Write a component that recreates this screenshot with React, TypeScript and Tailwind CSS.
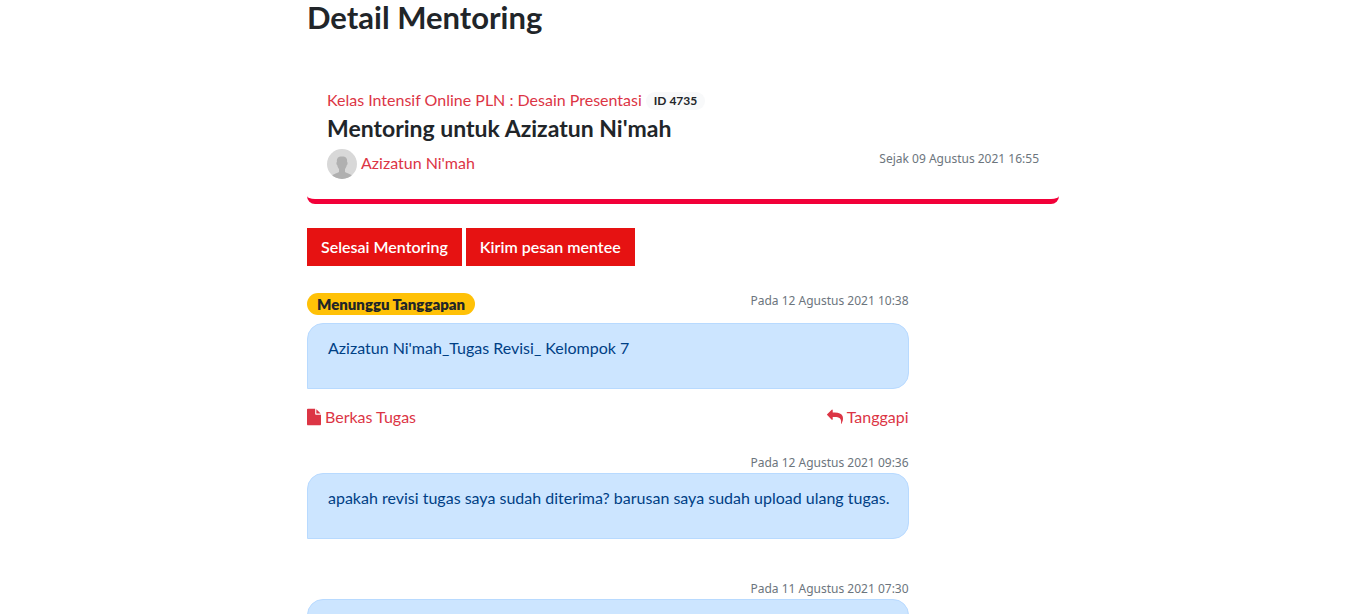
import type { ReactNode } from 'react';

type Message = {
  date: string;
  text?: string;
  status?: string;
  actions?: boolean;
};

const messages: Message[] = [
  {
    date: 'Pada 12 Agustus 2021 10:38',
    text: "Azizatun Ni'mah_Tugas Revisi_ Kelompok 7",
    status: 'Menunggu Tanggapan',
    actions: true,
  },
  {
    date: 'Pada 12 Agustus 2021 09:36',
    text: 'apakah revisi tugas saya sudah diterima? barusan saya sudah upload ulang tugas.',
  },
  { date: 'Pada 11 Agustus 2021 07:30' },
];

function Avatar() {
  return (
    <svg viewBox="0 0 30 30" className="size-[30px] shrink-0 rounded-full" aria-hidden="true">
      <rect width="30" height="30" fill="#d8d8d8" />
      <path
        d="M15 7.500c-4 0-5.400 1.800-5.100 5.500-.9.200-.5 2.900.4 3.300.3 1.600.8 2.800 1.700 3.700v3c-1.300 1.300-5 1.800-7.500 3.500V30h21v-3.500c-2.500-1.700-6.200-2.200-7.500-3.500v-3c.9-.9 1.400-2.100 1.700-3.700.9-.4 1.300-3.100.4-3.300.3-3.700-1.100-5.500-5.100-5.500z"
        fill="#b0b0b0"
      />
    </svg>
  );
}

function FileIcon() {
  return (
    <svg viewBox="0 0 1536 1792" className="h-[18px] w-3.5" fill="currentColor" aria-hidden="true">
      <path d="M1024 512V40q22 14 36 28l408 408q14 14 28 36h-472zm-128 32q0 40 28 68t68 28h544v1056q0 40-28 68t-68 28H96q-40 0-68-28t-28-68V96Q0 56 28 28T96 0h800v544z" />
    </svg>
  );
}

function ReplyIcon() {
  return (
    <svg viewBox="0 0 1792 1792" className="size-4" fill="currentColor" aria-hidden="true">
      <path
        transform="translate(1792 0) scale(-1 1)"
        d="M1792 640q0 26-19 45l-512 512q-19 19-45 19t-45-19-19-45V896H928q-98 0-175.500 6t-154 21.500-133 42.500-105.500 69.500-80 101T231.500 1274t-17.500 181q0 55 5 123 0 6 2.500 23.500t2.500 26.500q0 15-8.500 25t-23.500 10q-16 0-28-17-7-9-13-22t-13.500-30-10.500-24Q0 1286 0 1120q0-199 53-333 162-403 875-403h224V128q0-26 19-45t45-19 45 19l512 512q19 19 19 45z"
      />
    </svg>
  );
}

function Timestamp({ children }: { children: ReactNode }) {
  return (
    <time className="font-['Noto_Sans',sans-serif] text-[12px] leading-5 text-[#6c757d]">{children}</time>
  );
}

function ActionButton({ children }: { children: ReactNode }) {
  return (
    <button type="button" className="h-[38px] bg-[#e61212] px-3.5 font-semibold text-white">
      {children}
    </button>
  );
}

function MessageItem({ date, text, status, actions }: Message) {
  return (
    <li>
      <div className={status ? 'flex h-8 items-start justify-between' : 'flex h-5 items-start justify-end'}>
        {status && (
          <span className="mt-0.5 flex h-[22px] items-center rounded-full bg-[#ffc107] px-2.5 text-[15px] font-extrabold">
            {status}
          </span>
        )}
        <Timestamp>{date}</Timestamp>
      </div>
      <div className="mb-4 min-h-[66px] rounded-2xl rounded-bl-none border border-[#b8daff] bg-[#cce5ff] py-3 pr-2 pl-5 leading-6 text-[#004085]">
        {text}
      </div>
      {actions && (
        <div className="flex justify-between leading-6 text-[#dc3545]">
          <a href="#berkas" className="flex items-center gap-1">
            <FileIcon />
            Berkas Tugas
          </a>
          <a href="#tanggapi" className="flex items-center gap-1">
            <ReplyIcon />
            Tanggapi
          </a>
        </div>
      )}
    </li>
  );
}

export default function App() {
  return (
    <main className="mx-auto max-w-[752px] bg-white font-['Lato',sans-serif] text-[16px] text-[#212529]">
      <h1 className="text-[31px] leading-[34px] font-bold">Detail Mentoring</h1>

      <section className="mt-[34px] rounded-lg border-b-[5px] border-[#f20039] p-5">
        <div className="flex items-center gap-1 leading-6">
          <a href="#kelas" className="text-[#dc3545]">
            Kelas Intensif Online PLN : Desain Presentasi
          </a>
          <span className="mt-0.5 flex h-[18px] items-center rounded-full bg-[#f8f9fa] px-2 text-[12px] font-bold">
            ID 4735
          </span>
        </div>
        <h2 className="text-[23px] leading-8 font-bold">Mentoring untuk Azizatun Ni'mah</h2>
        <div className="mt-[5px] flex items-start justify-between">
          <a href="#mentee" className="flex items-start gap-1 leading-7 text-[#dc3545]">
            <Avatar />
            Azizatun Ni'mah
          </a>
          <Timestamp>Sejak 09 Agustus 2021 16:55</Timestamp>
        </div>
      </section>

      <div className="mt-6 flex gap-1">
        <ActionButton>Selesai Mentoring</ActionButton>
        <ActionButton>Kirim pesan mentee</ActionButton>
      </div>

      <ul className="mt-[25px] flex w-4/5 flex-col gap-6">
        {messages.map((message) => (
          <MessageItem key={message.date} {...message} />
        ))}
      </ul>
    </main>
  );
}
